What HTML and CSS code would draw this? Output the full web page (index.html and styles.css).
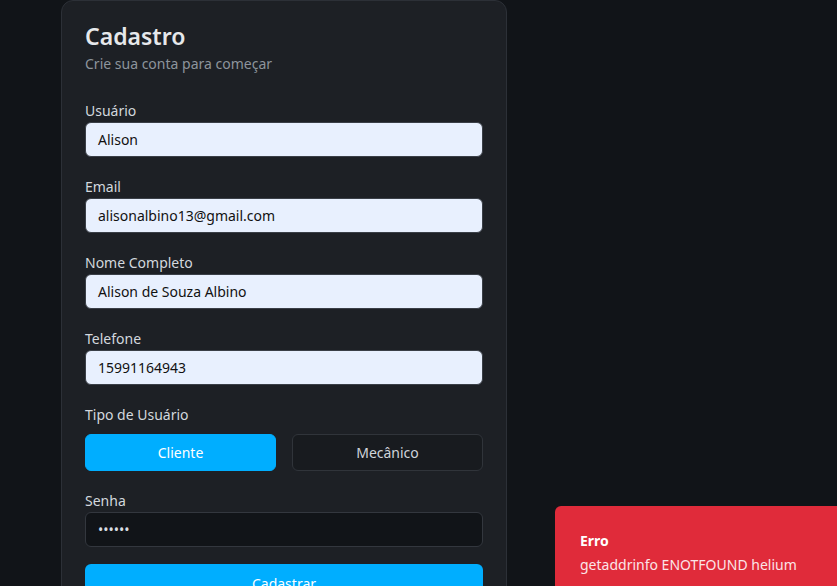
FILE: index.html
```html
<!DOCTYPE html>
<html lang="pt-BR">
<head>
<meta charset="utf-8">
<title>Cadastro</title>
<link rel="stylesheet" href="styles.css">
</head>
<body>
<main class="page">
  <section class="card">
    <header class="card-head">
      <h1 class="title">Cadastro</h1>
      <p class="subtitle">Crie sua conta para começar</p>
    </header>
    <form class="form">
      <div class="field">
        <label class="label">Usuário</label>
        <div class="input input-filled">Alison</div>
      </div>
      <div class="field">
        <label class="label">Email</label>
        <div class="input input-filled">alisonalbino13@gmail.com</div>
      </div>
      <div class="field">
        <label class="label">Nome Completo</label>
        <div class="input input-filled">Alison de Souza Albino</div>
      </div>
      <div class="field">
        <label class="label">Telefone</label>
        <div class="input input-filled">15991164943</div>
      </div>
      <div class="field">
        <label class="label label-group">Tipo de Usuário</label>
        <div class="toggle">
          <button type="button" class="toggle-btn active">Cliente</button>
          <button type="button" class="toggle-btn">Mecânico</button>
        </div>
      </div>
      <div class="field">
        <label class="label">Senha</label>
        <div class="input input-dark">••••••</div>
      </div>
      <button type="button" class="submit">Cadastrar</button>
    </form>
  </section>
</main>
<div class="toast">
  <div class="toast-title">Erro</div>
  <div class="toast-msg">getaddrinfo ENOTFOUND helium</div>
</div>
</body>
</html>
```
FILE: styles.css
```css
* { box-sizing: border-box; }
html, body { margin: 0; padding: 0; }
body {
  background: #111418;
  font-family: "Noto Sans", "Open Sans", sans-serif;
  color: #d6dbe1;
  width: 837px;
  height: 586px;
  overflow: hidden;
}
.page {
  padding-left: 61px;
}
.card {
  width: 446px;
  background: #1d2025;
  border: 1px solid #2c3037;
  border-radius: 12px;
  padding: 20px 23px 24px 23px;
}
.card-head { margin-bottom: 27px; }
.title {
  margin: 0;
  font-size: 23px;
  line-height: 30px;
  font-weight: 600;
  color: #e6e8eb;
}
.subtitle {
  margin: 3px 0 0 0;
  font-size: 14px;
  line-height: 20px;
  color: #8d949c;
}
.form {
  display: flex;
  flex-direction: column;
  gap: 20px;
}
.field {
  display: flex;
  flex-direction: column;
  gap: 1px;
}
.label {
  font-size: 14px;
  line-height: 20px;
  color: #d3d8de;
}
.label-group { margin-bottom: 8px; }
.input {
  height: 35px;
  border-radius: 6px;
  padding: 0 12px;
  display: flex;
  align-items: center;
  font-size: 14px;
}
.input-filled {
  background: #e8f0fe;
  border: 1px solid #3a3f47;
  color: #111;
}
.input-dark {
  background: #111418;
  border: 1px solid #33373e;
  color: #d8dde3;
}
.toggle {
  display: grid;
  grid-template-columns: 1fr 1fr;
  gap: 16px;
}
.toggle-btn {
  height: 37px;
  border-radius: 6px;
  border: 1px solid #30343a;
  background: #181b1f;
  color: #cfd4da;
  font-family: inherit;
  font-size: 14px;
}
.toggle-btn.active {
  background: #00aeff;
  border-color: #00aeff;
  color: #ffffff;
}
.submit {
  margin-top: -3px;
  height: 38px;
  border: none;
  border-radius: 6px;
  background: #00aeff;
  color: #ffffff;
  font-family: inherit;
  font-size: 14px;
}
.toast {
  position: fixed;
  left: 555px;
  top: 506px;
  width: 320px;
  height: 110px;
  background: #e02b3a;
  border-radius: 6px;
  padding: 25px 25px;
  color: #ffffff;
  font-size: 14px;
}
.toast-title {
  font-weight: 700;
  line-height: 20px;
}
.toast-msg {
  margin-top: 4px;
  line-height: 20px;
  color: #fbe4e7;
}
```
